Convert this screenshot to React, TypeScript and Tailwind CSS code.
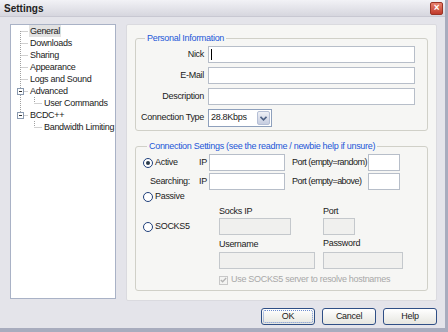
import type { ReactNode } from "react";

const font = { fontFamily: '"Liberation Sans", Arial, sans-serif' };

type TreeItem = { label: string; level: 0 | 1; box?: boolean; rootCont: boolean; selected?: boolean };

const tree: TreeItem[] = [
  { label: "General", level: 0, rootCont: true, selected: true },
  { label: "Downloads", level: 0, rootCont: true },
  { label: "Sharing", level: 0, rootCont: true },
  { label: "Appearance", level: 0, rootCont: true },
  { label: "Logs and Sound", level: 0, rootCont: true },
  { label: "Advanced", level: 0, rootCont: true, box: true },
  { label: "User Commands", level: 1, rootCont: true },
  { label: "BCDC++", level: 0, rootCont: false, box: true },
  { label: "Bandwidth Limiting", level: 1, rootCont: false },
];

function Connector({ item, first }: { item: TreeItem; first: boolean }) {
  const w = item.level === 0 ? 18 : 32;
  const dot = { stroke: "#a0a0a0", strokeWidth: 1, strokeDasharray: "1 1" };
  return (
    <svg width={w} height={12} className="shrink-0">
      {item.level === 0 ? (
        <>
          <line x1={9.5} y1={first ? 6 : 0} x2={9.5} y2={item.rootCont ? 12 : 6} {...dot} />
          <line x1={9.5} y1={6.5} x2={17} y2={6.5} {...dot} />
          {item.box && (
            <>
              <rect x={6.5} y={3.5} width={6} height={6} fill="#fff" stroke="#8a9ab0" />
              <line x1={8} y1={6.5} x2={11} y2={6.5} stroke="#303030" />
            </>
          )}
        </>
      ) : (
        <>
          {item.rootCont && <line x1={9.5} y1={0} x2={9.5} y2={12} {...dot} />}
          <line x1={23.5} y1={0} x2={23.5} y2={6} {...dot} />
          <line x1={23.5} y1={6.5} x2={31} y2={6.5} {...dot} />
        </>
      )}
    </svg>
  );
}

function Input({ w, disabled, children }: { w: string; disabled?: boolean; children?: ReactNode }) {
  return (
    <div className={`${w} h-[17px] shrink-0 border flex items-center ${disabled ? "bg-[#f0f0ee] border-[#c4c8cc]" : "bg-white border-[#b7bec9]"}`}>
      {children}
    </div>
  );
}

function Radio({ checked }: { checked?: boolean }) {
  return (
    <span className="w-[10px] h-[10px] rounded-full border border-[#1f3f7a] bg-white flex items-center justify-center shrink-0">
      {checked && <span className="w-[4px] h-[4px] rounded-full bg-[#2a3a4a]" />}
    </span>
  );
}

function Group({ title, className, children }: { title: string; className: string; children: ReactNode }) {
  return (
    <fieldset className={`border border-[#d0d0c8] rounded-[3px] ${className}`}>
      <legend className="ml-[4px] px-[2px] text-[#2457d8] leading-[12px] whitespace-nowrap">{title}</legend>
      {children}
    </fieldset>
  );
}

function Button({ label, focus }: { label: string; focus?: boolean }) {
  return (
    <button className="w-[54px] h-[17px] rounded-[3px] border border-[#2f4f86] bg-gradient-to-b from-white to-[#e6e6e0] flex items-center justify-center p-[1px]">
      <span className={`w-full h-full flex items-center justify-center rounded-[2px] ${focus ? "border border-dotted border-[#6d8ccf]" : ""}`}>{label}</span>
    </button>
  );
}

export default function App() {
  return (
    <div style={font} className="w-[448px] h-[332px] bg-[#e4e4ea] text-[9px] tracking-[-0.3px] text-[#1a1a1a] flex flex-col border-r-[3px] border-b-[4px] border-[#a8acbe] overflow-hidden whitespace-nowrap">
      <div className="h-[17px] shrink-0 bg-gradient-to-b from-[#f2f2f6] to-[#d6d6de] flex items-center justify-between pl-[4px] pr-[2px] border-b border-[#c8c8d2]">
        <span className="font-bold text-[10px] tracking-[0px] text-[#222]">Settings</span>
        <span className="w-[13px] h-[13px] rounded-[2px] bg-gradient-to-b from-[#e8806c] to-[#c0392b] border border-[#9a3426] flex items-center justify-center text-white text-[10px] font-bold leading-none">×</span>
      </div>

      <div className="flex pt-[7px] pl-[10px] gap-[10px]">
        <div className="w-[106px] h-[275px] bg-white border border-[#a9b2c6]">
          {tree.map((item, i) => (
            <div key={item.label} className="h-[12px] flex items-center">
              <Connector item={item} first={i === 0} />
              <span className={`px-[1px] leading-[12px] ${item.selected ? "bg-[#e2e2e2]" : ""}`}>{item.label}</span>
            </div>
          ))}
        </div>

        <div className="w-[311px] h-[277px] bg-[#f6f6f4] border border-[#dadadf] rounded-[2px] pt-[7px] pl-[8px]">
          <Group title="Personal Information" className="w-[293px] h-[99px] pl-[5px] pt-[2px]">
            <div className="grid grid-cols-[63px_207px] gap-x-[4px] gap-y-[4px] items-center">
              <span className="text-right">Nick</span>
              <Input w="w-[207px]">
                <span className="ml-[2px] w-px h-[11px] bg-black" />
              </Input>
              <span className="text-right">E-Mail</span>
              <Input w="w-[207px]" />
              <span className="text-right">Description</span>
              <Input w="w-[207px]" />
              <span className="text-right">Connection Type</span>
              <div className="w-[64px] h-[18px] bg-white border border-[#8ea0bc] flex items-center justify-between pl-[2px] pr-[1px]">
                <span>28.8Kbps</span>
                <span className="w-[13px] h-[14px] rounded-[2px] bg-gradient-to-b from-[#eef0f6] to-[#c6cde0] border border-[#b5bfd6] flex items-center justify-center">
                  <svg width="7" height="5" viewBox="0 0 7 5">
                    <path d="M0.5 0.8 L3.5 3.8 L6.5 0.8" fill="none" stroke="#4d6185" strokeWidth="1.6" />
                  </svg>
                </span>
              </div>
            </div>
          </Group>

          <Group title="Connection Settings (see the readme / newbie help if unsure)" className="mt-[9px] w-[293px] h-[151px] pl-[7px] pt-[2px]">
            <div className="flex flex-col">
              <div className="flex items-center h-[17px]">
                <div className="w-[56px] flex items-center gap-[2px]">
                  <Radio checked />
                  <span>Active</span>
                </div>
                <span className="w-[10px]">IP</span>
                <Input w="w-[76px]" />
                <span className="ml-[7px] w-[76px] tracking-[-0.55px]">Port (empty=random)</span>
                <Input w="w-[32px]" />
              </div>
              <div className="flex items-center h-[17px] mt-[2px]">
                <span className="w-[56px] pl-[7px]">Searching:</span>
                <span className="w-[10px]">IP</span>
                <Input w="w-[76px]" />
                <span className="ml-[7px] w-[76px] tracking-[-0.55px]">Port (empty=above)</span>
                <Input w="w-[32px]" />
              </div>
              <div className="flex items-center h-[12px] mt-[1px] gap-[2px]">
                <Radio />
                <span>Passive</span>
              </div>
              <div className="flex items-center h-[13px] mt-[2px] pl-[76px]">
                <span className="w-[104px]">Socks IP</span>
                <span>Port</span>
              </div>
              <div className="flex items-center h-[17px]">
                <div className="w-[76px] flex items-center gap-[2px]">
                  <Radio />
                  <span>SOCKS5</span>
                </div>
                <Input w="w-[72px]" disabled />
                <span className="w-[32px]" />
                <Input w="w-[32px]" disabled />
              </div>
              <div className="flex items-center h-[12px] mt-[4px] pl-[76px]">
                <span className="w-[104px]">Username</span>
                <span className="-mt-[2px]">Password</span>
              </div>
              <div className="flex items-center h-[17px] mt-[1px] pl-[76px] gap-[8px]">
                <Input w="w-[96px]" disabled />
                <Input w="w-[80px]" disabled />
              </div>
              <div className="flex items-center h-[14px] mt-[4px] pl-[76px] gap-[3px] text-[#a8a8a8]">
                <span className="w-[9px] h-[9px] border border-[#c8c8c8] bg-[#f4f4f2] flex items-center justify-center">
                  <svg width="7" height="6" viewBox="0 0 7 6">
                    <path d="M0.8 3 L2.6 4.8 L6.2 1" fill="none" stroke="#b4b4b4" strokeWidth="1.3" />
                  </svg>
                </span>
                <span>Use SOCKS5 server to resolve hostnames</span>
              </div>
            </div>
          </Group>
        </div>
      </div>

      <div className="flex justify-end gap-[7px] pr-[8px] mt-[7px]">
        <Button label="OK" focus />
        <Button label="Cancel" />
        <Button label="Help" />
      </div>
    </div>
  );
}
